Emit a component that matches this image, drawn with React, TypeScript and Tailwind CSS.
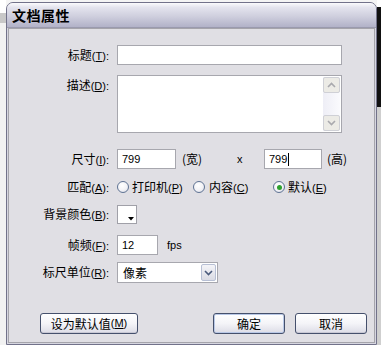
import React from 'react';

const cjk = "font-['Noto_Sans_CJK_SC','Noto_Sans',sans-serif]";
const lat = "font-['Liberation_Sans','DejaVu_Sans',sans-serif]";

function Key({ k }: { k: string }) {
  return (
    <span className={`${lat} text-[11px]`}>
      (<span className="underline underline-offset-[1px]">{k}</span>)
    </span>
  );
}

function Label({ zh, k, top = false }: { zh: string; k: string; top?: boolean }) {
  return (
    <div className={`w-[100px] shrink-0 text-right leading-none ${top ? 'pt-[4px] self-start' : ''}`}>
      {zh}
      <Key k={k} />
      <span className={`${lat} text-[11px]`}>:</span>
    </div>
  );
}

function Field({ className, value, caret }: { className: string; value?: string; caret?: boolean }) {
  return (
    <div className={`h-[20px] border border-[#a7a7ae] bg-white flex items-center pl-[4px] ${lat} text-[11px] text-black ${className}`}>
      {value}
      {caret && <span className="ml-[1px] w-px h-[13px] bg-black" />}
    </div>
  );
}

function Radio({ checked }: { checked?: boolean }) {
  return (
    <span className="w-[12px] h-[12px] rounded-full border border-[#5f7393] bg-[radial-gradient(circle_at_40%_35%,#ffffff_0%,#f2f2f6_55%,#d4d6e0_100%)] flex items-center justify-center shrink-0">
      {checked && <span className="w-[5px] h-[5px] rounded-full bg-[#2fa12f]" />}
    </span>
  );
}

function Chevron({ up, color }: { up?: boolean; color: string }) {
  return (
    <svg width="9" height="6" viewBox="0 0 9 6">
      <path
        d={up ? 'M1 5 L4.5 1.5 L8 5' : 'M1 1 L4.5 4.5 L8 1'}
        fill="none"
        stroke={color}
        strokeWidth="1.6"
      />
    </svg>
  );
}

function Button({ children, className, primary }: { children: React.ReactNode; className: string; primary?: boolean }) {
  return (
    <div
      className={`h-[21px] rounded-[3px] border border-[#45506c] bg-[linear-gradient(to_bottom,#ffffff_0%,#f4f4f8_50%,#dcdce6_100%)] flex items-center justify-center text-black ${primary ? 'shadow-[inset_0_0_0_1px_#b9c8e6]' : 'shadow-[inset_0_-1px_0_#c8c8d4]'} ${className}`}
    >
      {children}
    </div>
  );
}

export default function App() {
  return (
    <div className={`w-[381px] h-[345px] flex bg-[#f4f4f4] overflow-hidden ${cjk} text-[12px] text-black`}>
      <div className="w-[6px] shrink-0 flex flex-col">
        <div className="h-[13px] bg-white" />
        <div className="h-[10px] bg-[#c8c8c8]" />
        <div className="flex-1 bg-[#f2f2f2]" />
      </div>

      <div className="mt-[2px] w-[371px] h-[343px] shrink-0 flex flex-col border border-[#72728a] rounded-t-[7px] overflow-hidden bg-[#d6d6e0]">
        {/* title bar */}
        <div className="h-[25px] shrink-0 flex items-center pl-[5px] bg-[linear-gradient(to_bottom,#fbfbfd_0%,#e4e4ee_18%,#cfcfde_55%,#b2b2c8_100%)] border-b border-[#9a9aae]">
          <span className="text-[14px] font-bold leading-none tracking-[0.5px]">文档属性</span>
        </div>

        {/* body */}
        <div className="flex-1 flex flex-col px-[1px] pb-[1px]">
          <div className="flex-1 flex flex-col border border-[#a5a4ab] bg-[#e0dfe4]">
            <div className="mt-[16px] h-[20px] flex items-center gap-[8px]">
              <Label zh="标题" k="T" />
              <Field className="w-[225px]" />
            </div>

            <div className="mt-[10px] h-[58px] flex gap-[8px]">
              <Label zh="描述" k="D" top />
              <div className="w-[225px] h-[58px] border border-[#a7a7ae] bg-white flex justify-end p-[1px]">
                <div className="w-[17px] flex flex-col bg-[linear-gradient(to_right,#eeeef6,#fafafd)]">
                  <div className="h-[16px] rounded-[2px] border border-[#cfd0d6] bg-[#ecebe6] flex items-center justify-center">
                    <Chevron up color="#a9a9ae" />
                  </div>
                  <div className="flex-1" />
                  <div className="h-[16px] rounded-[2px] border border-[#cfd0d6] bg-[#ecebe6] flex items-center justify-center">
                    <Chevron color="#a9a9ae" />
                  </div>
                </div>
              </div>
            </div>

            <div className="mt-[16px] h-[20px] flex items-center gap-[8px]">
              <Label zh="尺寸" k="I" />
              <div className="flex items-center">
                <Field className="w-[59px]" value="799" />
                <span className="w-[55px] pl-[6px]">(宽)</span>
                <span className={`w-[33px] pl-[6px] ${lat} text-[11px]`}>x</span>
                <Field className="w-[58px]" value="799" caret />
                <span className="pl-[5px]">(高)</span>
              </div>
            </div>

            <div className="mt-[8px] h-[20px] flex items-center gap-[8px]">
              <Label zh="匹配" k="A" />
              <div className="flex items-center">
                <div className="w-[76px] flex items-center gap-[3px]">
                  <Radio />
                  <span>
                    打印机<Key k="P" />
                  </span>
                </div>
                <div className="w-[80px] flex items-center gap-[4px]">
                  <Radio />
                  <span>
                    内容<Key k="C" />
                  </span>
                </div>
                <div className="flex items-center gap-[3px]">
                  <Radio checked />
                  <span>
                    默认<Key k="E" />
                  </span>
                </div>
              </div>
            </div>

            <div className="mt-[7px] h-[20px] flex items-center gap-[8px]">
              <Label zh="背景颜色" k="B" />
              <div className="w-[20px] h-[19px] border border-[#a0a0a8] bg-white flex items-end justify-end pr-[2px] pb-[2px]">
                <svg width="6" height="4" viewBox="0 0 6 4">
                  <path d="M0 0 H6 L3 3.5 Z" fill="#000" />
                </svg>
              </div>
            </div>

            <div className="mt-[11px] h-[20px] flex items-center gap-[8px]">
              <Label zh="帧频" k="F" />
              <div className="flex items-center">
                <Field className="w-[41px]" value="12" />
                <span className={`pl-[9px] ${lat} text-[11px]`}>fps</span>
              </div>
            </div>

            <div className="mt-[7px] h-[21px] flex items-center gap-[8px]">
              <Label zh="标尺单位" k="R" />
              <div className="w-[101px] h-[21px] border border-[#a7a7ae] bg-white flex items-center justify-between pl-[5px] pr-[1px]">
                <span>像素</span>
                <div className="w-[15px] h-[17px] rounded-[2px] border border-[#b7bfd4] bg-[linear-gradient(to_bottom,#f4f4f8,#dadbe4)] flex items-center justify-center">
                  <Chevron color="#4a5a7c" />
                </div>
              </div>
            </div>

            <div className="mt-[30px] flex items-center">
              <Button className="ml-[31px] w-[98px]">
                设为默认值<Key k="M" />
              </Button>
              <div className="flex-1" />
              <Button className="w-[72px]" primary>
                确定
              </Button>
              <Button className="ml-[10px] mr-[7px] w-[72px]">取消</Button>
            </div>
          </div>
        </div>
      </div>

      <div className="w-[4px] shrink-0 flex flex-col">
        <div className="h-[7px] bg-white" />
        <div className="h-[100px] bg-[#111111]" />
        <div className="flex-1 bg-[#cfcfcf]" />
      </div>
    </div>
  );
}
